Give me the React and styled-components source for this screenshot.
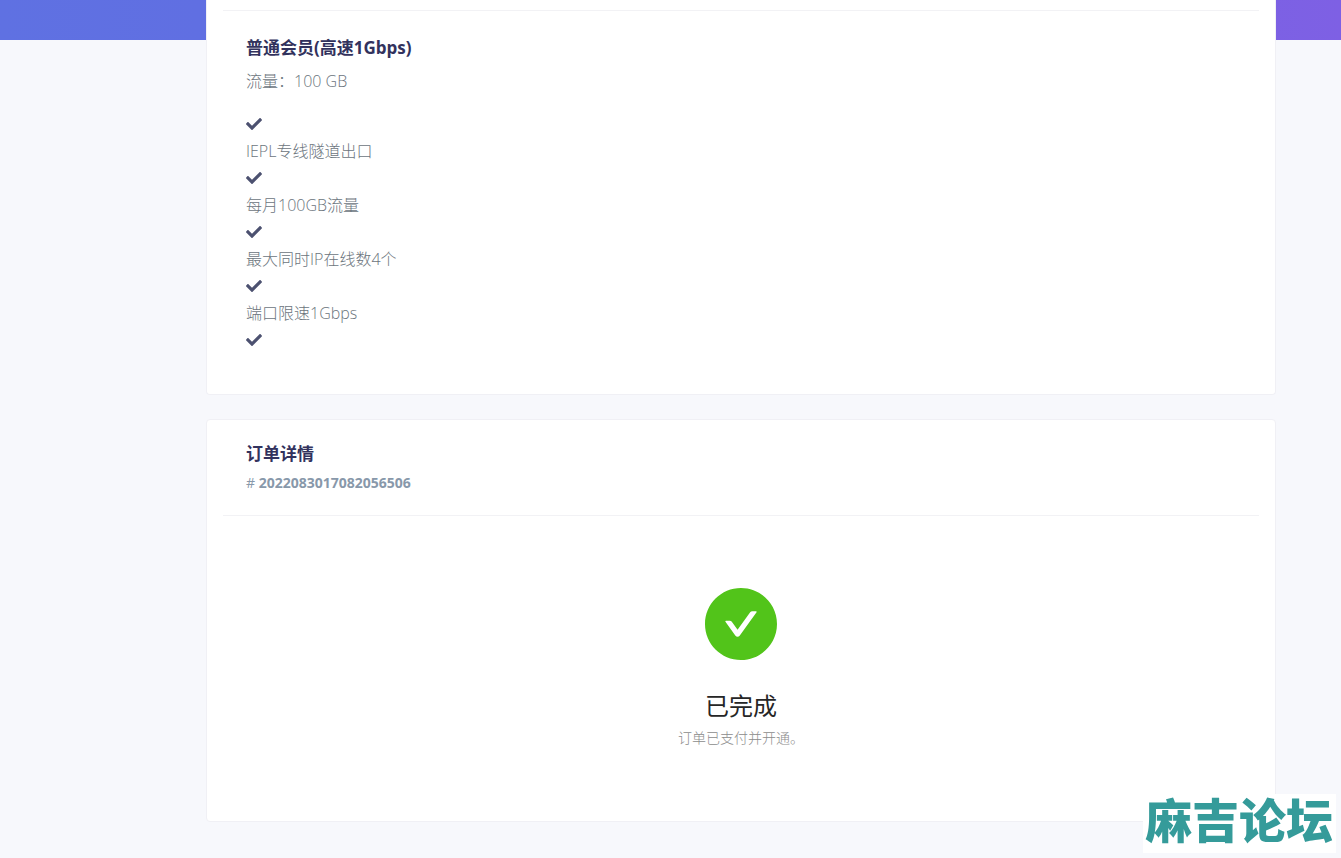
import React from "react";
import styled, { createGlobalStyle } from "styled-components";
import { FaCheck } from "react-icons/fa";

const GlobalStyle = createGlobalStyle`
  *, *::before, *::after { box-sizing: border-box; }
  body {
    margin: 0;
    background: #f7f8fc;
    color: #6c757d;
    font-family: "Open Sans", "Noto Sans CJK SC", sans-serif;
    font-size: 16px;
    font-weight: 300;
    line-height: 27px;
  }
`;

const Page = styled.div`
  min-height: 100vh;
  background: linear-gradient(87deg, #5f71e2 0, #606fe2 15%, #7e60e4 100%) top / 100% 40px no-repeat;
`;

const Content = styled.main`
  display: flex;
  flex-direction: column;
  gap: 24px;
  padding: 0 65px 36px 206px;
`;

const Card = styled.section`
  background: #fff;
  border: 1px solid #f0f0f5;
  border-radius: ${(p) => (p.$continued ? "0 0 4px 4px" : "4px")};
  border-top-width: ${(p) => (p.$continued ? "0" : "1px")};
  padding: ${(p) => (p.$continued ? "10px" : "21px")} 16px 0;
`;

const Divider = styled.hr`
  margin: 0;
  border: 0;
  border-top: 1px solid #f2f2f5;
`;

const Block = styled.div`
  padding: ${(p) => p.$pad};
`;

const Title = styled.h2`
  margin: 0;
  color: #32325d;
  font-size: 17px;
  font-weight: 700;
  line-height: 26px;
`;

const Traffic = styled.p`
  margin: 7px 0 16px;
`;

const Features = styled.ul`
  margin: 0;
  padding: 0;
  list-style: none;
`;

const Feature = styled.li`
  display: flex;
  flex-direction: column;
`;

const Tick = styled.span`
  display: flex;
  align-items: center;
  height: 27px;
  padding-bottom: 2px;
  color: #4c5170;
`;

const OrderNumber = styled.p`
  margin: 6px 0 0;
  color: #8898aa;
  font-size: 14px;
  font-weight: 400;
  line-height: 20px;

  strong { font-weight: 700; }
`;

const Result = styled.div`
  display: flex;
  flex-direction: column;
  align-items: center;
  padding: 72px 32px;
  text-align: center;
`;

const ResultIcon = styled.svg`
  width: 72px;
  height: 72px;
  margin-bottom: 24px;
  fill: #52c41a;
`;

const ResultTitle = styled.h3`
  margin: 0;
  color: #262626;
  font-size: 24px;
  font-weight: 400;
  line-height: 43px;
`;

const ResultText = styled.p`
  margin: 0;
  color: #8c8c8c;
  font-size: 14px;
  line-height: 22px;
`;

const Watermark = styled.div`
  position: fixed;
  right: 5px;
  bottom: 5px;
  padding: 0 3px 11px 2px;
  background: #fff;
  color: #359b9a;
  font-family: "Noto Sans CJK SC", sans-serif;
  font-size: 47px;
  font-weight: 900;
  line-height: 48px;
  white-space: nowrap;
`;

const features = ["IEPL专线隧道出口", "每月100GB流量", "最大同时IP在线数4个", "端口限速1Gbps", ""];

export default function App() {
  return (
    <>
      <GlobalStyle />
      <Page>
        <Content>
          <Card $continued>
            <Divider />
            <Block $pad="24px 23px 40px">
              <Title>普通会员(高速1Gbps)</Title>
              <Traffic>流量：100 GB</Traffic>
              <Features>
                {features.map((text) => (
                  <Feature key={text}>
                    <Tick><FaCheck size={16} aria-hidden="true" /></Tick>
                    {text}
                  </Feature>
                ))}
              </Features>
            </Block>
          </Card>
          <Card>
            <Block $pad="0 23px 22px">
              <Title>订单详情</Title>
              <OrderNumber># <strong>2022083017082056506</strong></OrderNumber>
            </Block>
            <Divider />
            <Result>
              <ResultIcon viewBox="64 64 896 896" aria-hidden="true">
                <path d="M512 64C264.6 64 64 264.6 64 512s200.6 448 448 448 448-200.6 448-448S759.4 64 512 64zm193.5 301.7l-210.6 292a31.8 31.8 0 01-51.7 0L318.5 484.9c-3.8-5.3 0-12.7 6.5-12.7h46.9c10.2 0 19.9 4.9 25.9 13.3l71.2 98.8 157.2-218c6-8.3 15.6-13.3 25.9-13.3H699c6.5 0 10.3 7.4 6.5 12.7z" />
              </ResultIcon>
              <ResultTitle>已完成</ResultTitle>
              <ResultText>订单已支付并开通。</ResultText>
            </Result>
          </Card>
        </Content>
      </Page>
      <Watermark>麻吉论坛</Watermark>
    </>
  );
}
